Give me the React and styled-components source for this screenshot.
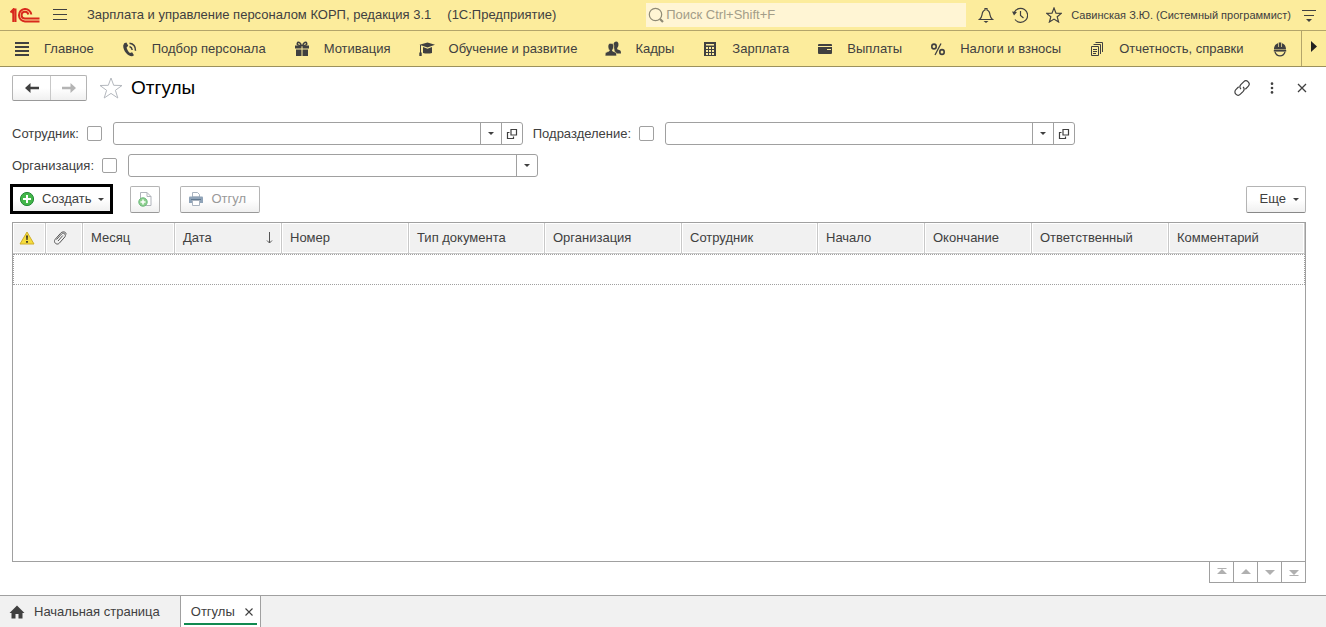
import React, { useState } from "react";
import styled, { createGlobalStyle } from "styled-components";

const sections = [
  { title: "Главное", icon: "lines" },
  { title: "Подбор персонала", icon: "phone" },
  { title: "Мотивация", icon: "gift" },
  { title: "Обучение и развитие", icon: "cap" },
  { title: "Кадры", icon: "people" },
  { title: "Зарплата", icon: "calc" },
  { title: "Выплаты", icon: "card" },
  { title: "Налоги и взносы", icon: "percent" },
  { title: "Отчетность, справки", icon: "docs" },
];

//the last column has no width, it takes the rest of the table
const columns = [
  { title: "Месяц", width: 92 },
  { title: "Дата", width: 107, sorted: true },
  { title: "Номер", width: 127 },
  { title: "Тип документа", width: 136 },
  { title: "Организация", width: 137 },
  { title: "Сотрудник", width: 136 },
  { title: "Начало", width: 107 },
  { title: "Окончание", width: 107 },
  { title: "Ответственный", width: 137 },
  { title: "Комментарий" },
];

//section and tool icons, all drawn on a 16x16 grid
const glyphs = {
  lines: <path d="M1 2h14M1 6h14M1 10h14M1 14h14" stroke="currentColor" strokeWidth="2" />,
  phone: (
    <>
      <path d="M2.2 2.2 4.4 1.4 6.2 4.8 4.6 6.4C5 8.6 6.3 10.6 8 11.9L10.1 11.2 12 14.3 10.2 15.3C6 15.6 1 9.8 1.2 4.5Z" fill="currentColor" />
      <path d="M7.500 5.500C9.200 6 10 7.200 10.200 9M7.500 2.300C11.300 2.800 13.600 5.600 13.500 9.800" fill="none" stroke="currentColor" strokeWidth="1.500" />
    </>
  ),
  gift: (
    <>
      <path d="M1 4.500h6.500v3H1zM8.500 4.500H15v3H8.500zM2 8.500h5.500V15H2zM8.500 8.500H14V15H8.500z" fill="currentColor" />
      <path d="M7.300 4.500C4 4.500 2.800 3.500 3.300 2.200S6.500 1 7.300 4.500ZM8.700 4.500C12 4.500 13.200 3.500 12.700 2.200S9.500 1 8.700 4.500Z" fill="none" stroke="currentColor" strokeWidth="1.500" />
    </>
  ),
  cap: (
    <>
      <path d="M0.500 3.700 8.500 1.500 16 3.700 8.500 6.500Z" fill="currentColor" />
      <path d="M4 6 8.500 7.700 13 6V12C10.500 12.700 6.500 12.700 4 12Z" fill="currentColor" />
      <path d="M1.500 4V12" stroke="currentColor" />
      <path d="M0.300 11.500h2.400V15H0.300z" fill="currentColor" />
    </>
  ),
  people: (
    <>
      <path d="M11 0.500C13.200 0.500 13.700 2.300 13.400 4.200 13.300 5.500 12.700 6.300 12.200 6.900V8.200L15.300 9.400Q16 9.900 16 12.500H10L8.500 3Q9 0.500 11 0.500Z" fill="currentColor" />
      <path d="M5.800 2.300C8.500 2.300 9 4.300 8.700 6 8.500 7.500 8 8.300 7.500 8.900V10L10.700 11.300Q11.700 11.900 11.700 15H0Q0 11.900 1 11.300L4.200 10V8.900C3.600 8.300 3.100 7.500 3 6 2.800 4.300 3.500 2.300 5.800 2.300Z" fill="currentColor" stroke="#fcec9c" strokeWidth="0.700" />
    </>
  ),
  calc: (
    <>
      <path d="M2 1h12v14H2z" fill="currentColor" />
      <path d="M4 3h8v1.500H4zM4 6h2v2H4zM7 6h2v2H7zM10 6h2v2h-2zM4 9h2v2H4zM7 9h2v2H7zM10 9h2v2h-2zM4 12h2v2H4zM7 12h2v2H7zM10 12h2v2h-2z" fill="#fcec9c" />
    </>
  ),
  card: (
    <>
      <path d="M2 3h12q1 0 1 1v1H1V4q0-1 1-1zM1 6h14v6q0 1-1 1H2q-1 0-1-1z" fill="currentColor" />
      <path d="M10 8.500h4" stroke="#fcec9c" />
    </>
  ),
  percent: (
    <g fill="none" stroke="currentColor">
      <ellipse cx="4" cy="5.500" rx="2.200" ry="2.400" strokeWidth="1.600" />
      <ellipse cx="12" cy="11" rx="2.200" ry="2.400" strokeWidth="1.600" />
      <path d="M11 2.500 5 14" strokeWidth="1.300" />
    </g>
  ),
  docs: (
    <g fill="none" stroke="currentColor">
      <path d="M2.500 5.500h7v9h-7zM4.500 3.500h7v9.500M6.500 1.500h7v9.500" />
      <path d="M4 8.500h4M4 10.500h4M4 12.500h3" />
    </g>
  ),
  helmet: (
    <>
      <path d="M2 8.500C2 4.500 4 3 6 2.300V6H6.700V1.600H9.300V6H10V2.300C12 3 14 4.500 14 8.500Z" fill="currentColor" />
      <path d="M1.800 9.800h12.400" stroke="currentColor" strokeWidth="1.600" />
      <path d="M3 11C4 14 6 14.800 8 14.800S12 14 13 11" fill="none" stroke="currentColor" strokeWidth="1.300" />
    </>
  ),
  burger: <path d="M1 2.500h14M1 7.500h14M1 12.500h14" stroke="currentColor" />,
  search: (
    <g fill="none" stroke="currentColor">
      <circle cx="7.500" cy="7.500" r="6.200" strokeWidth="1.200" />
      <path d="M12 12 15 15" strokeWidth="2.200" />
    </g>
  ),
  bell: (
    <>
      <path d="M1.500 12.500C4.500 10.500 3.500 7 5 4.700 5.800 3.500 7 3 7 3V1.500H9V3S10.200 3.500 11 4.700C12.500 7 11.500 10.500 14.500 12.500Z" fill="none" stroke="currentColor" strokeWidth="1.200" />
      <path d="M5.500 14h5L8 16z" fill="currentColor" />
    </>
  ),
  history: (
    <>
      <path d="M2.200 5.500A7 7 0 1 1 3 12.500M8.500 4V8.500L11.500 11" fill="none" stroke="currentColor" strokeWidth="1.200" />
      <path d="M0 4.500 5 5 2 8.500Z" fill="currentColor" />
    </>
  ),
  star: (
    <path d="M8 1 10 6.100 15.300 6.400 11.200 9.800 12.600 15 8 12.100 3.400 15 4.800 9.800 0.700 6.400 6 6.100Z" fill="none" stroke="currentColor" strokeWidth="1.200" />
  ),
  settings: (
    <>
      <path d="M1 3.500h14M3 8.500h10" stroke="currentColor" />
      <path d="M5 12h6l-3 3z" fill="currentColor" />
    </>
  ),
  link: (
    <g fill="none" stroke="currentColor" strokeWidth="1.200" transform="rotate(-45 8 8)">
      <path d="M6.500 4.800H2.500a3.200 3.200 0 0 0 0 6.400H6.500A3.200 3.200 0 0 0 9.500 8" />
      <path d="M9.500 11.200H13.500a3.200 3.200 0 0 0 0-6.400H9.500A3.200 3.200 0 0 0 6.500 8" />
    </g>
  ),
  dots: (
    <g fill="currentColor">
      <circle cx="8" cy="3" r="1.500" />
      <circle cx="8" cy="8" r="1.500" />
      <circle cx="8" cy="13" r="1.500" />
    </g>
  ),
  close: <path d="M4 4 12 12M12 4 4 12" stroke="currentColor" strokeWidth="1.300" />,
  back: <path d="M1 8 6.500 3V6.800H15V9.200H6.500V13Z" fill="currentColor" />,
  forward: <path d="M15 8 9.500 3V6.800H1V9.200H9.500V13Z" fill="currentColor" />,
  open: (
    <g fill="none" stroke="currentColor" strokeWidth="1.200">
      <path d="M7 3.500h5.500V9H7z" />
      <path d="M5.500 6.500h-2v6H9.500v-2" />
    </g>
  ),
  add: (
    <>
      <circle cx="8" cy="8" r="6.600" fill="#43b649" stroke="#258a38" />
      <path d="M8 4V12M4 8H12" stroke="#fff" strokeWidth="2" />
    </>
  ),
  copy: (
    <>
      <path d="M3.500 1.500h6.500l4 4v9H3.500z" fill="#fff" stroke="#b0b4bb" />
      <path d="M10 1.500v4h4" fill="none" stroke="#b0b4bb" />
      <circle cx="6" cy="11" r="4.200" fill="#8fd08f" stroke="#68b878" />
      <path d="M6 8.500v5M3.500 11h5" stroke="#fff" strokeWidth="1.500" />
    </>
  ),
  print: (
    <>
      <path d="M4.500 1.500h5l2 2V6h-7z" fill="#fff" stroke="#a9b3bf" />
      <path d="M2 5.500h12q1 0 1 1V12H1V6.500q0-1 1-1z" fill="#8fa3b8" />
      <path d="M3 8.500h10" stroke="#60788f" />
      <path d="M4.500 9.500h7v5h-7z" fill="#fff" stroke="#a9b3bf" />
    </>
  ),
  warning: (
    <>
      <path d="M8 2 15 14H1Z" fill="#f5dc3c" stroke="#cfae28" strokeLinejoin="round" />
      <path d="M7 5.500h2L8.600 10H7.400zM7.100 11h1.800v1.800H7.100z" fill="#3b3524" />
    </>
  ),
  clip: (
    <path d="M4.500 9.500 9.500 4C11.300 2 14.800 4.500 12.800 7L7.300 13.200C5 15.600 0.800 12.500 3.200 9.300L8.500 3.300C10 1.300 14.500 1.300 14 4.500M10.800 5.500 6 11" fill="none" stroke="#555" />
  ),
  home: <path d="M8 1.500 15.500 9H13.500V14.500H9.500V10H6.500V14.500H2.500V9H0.500Z" fill="currentColor" />,
  first: <path d="M3.500 4h9v1h-9zM8 5 13 10H3z" fill="currentColor" />,
  up: <path d="M8 5 13 10H3z" fill="currentColor" />,
  down: <path d="M3 6H13L8 11z" fill="currentColor" />,
  last: <path d="M3 6H13L8 11zM3.500 11h9v1h-9z" fill="currentColor" />,
};

function Icon({ name, size = 16 }) {
  return (
    <Svg $size={size} viewBox="0 0 16 16" aria-hidden="true">
      {glyphs[name]}
    </Svg>
  );
}

function Filter({ id, label, canOpen }) {
  const [enabled, setEnabled] = useState(false);
  const [value, setValue] = useState("");

  return (
    <FilterItem>
      <label htmlFor={`${id}-on`}>{label}</label>
      <Check
        id={`${id}-on`}
        type="checkbox"
        checked={enabled}
        onChange={(e) => setEnabled(e.target.checked)}
      />
      <Combo>
        <input
          type="text"
          aria-label={label}
          value={value}
          onChange={(e) => setValue(e.target.value)}
        />
        <button type="button" aria-label="Выбрать">
          <Caret />
        </button>
        {canOpen && (
          <button type="button" aria-label="Открыть">
            <Icon name="open" />
          </button>
        )}
      </Combo>
    </FilterItem>
  );
}

export default function App() {
  return (
    <>
      <GlobalStyle />
      <Page>
        <TitleBar>
          <Logo viewBox="0 0 30 15" role="img" aria-label="1С">
            <path d="M0.500 4.500 3.300 1.500V14M3.300 1.500H5.500V14M2 4.500H3.300" />
            <path d="M21.300 6.500A6.200 6.200 0 1 0 15 13.400H29.500" />
            <path d="M18.300 6.500A3.400 3.400 0 1 0 15 10.500H29.500" />
          </Logo>
          <IconButton type="button" aria-label="Меню">
            <Icon name="burger" />
          </IconButton>
          <AppName>
            <span>Зарплата и управление персоналом КОРП, редакция 3.1</span>
            <span>(1С:Предприятие)</span>
          </AppName>
          <Search>
            <Icon name="search" />
            <input type="search" aria-label="Поиск" placeholder="Поиск Ctrl+Shift+F" />
          </Search>
          <Tools>
            <IconButton type="button" aria-label="Уведомления">
              <Icon name="bell" />
            </IconButton>
            <IconButton type="button" aria-label="История">
              <Icon name="history" />
            </IconButton>
            <IconButton type="button" aria-label="Избранное">
              <Icon name="star" />
            </IconButton>
          </Tools>
          <User href="#user">Савинская З.Ю. (Системный программист)</User>
          <IconButton type="button" aria-label="Сервис и настройки">
            <Icon name="settings" />
          </IconButton>
        </TitleBar>

        <Sections>
          <SectionList>
            {sections.map((section) => (
              <a href="#section" key={section.title}>
                <Icon name={section.icon} />
                {section.title}
              </a>
            ))}
            <a href="#section" aria-label="Охрана труда">
              <Icon name="helmet" />
            </a>
          </SectionList>
          <ScrollButton type="button" aria-label="Далее">
            <svg width="6" height="11" viewBox="0 0 6 11">
              <path d="M0 0 6 5.500 0 11z" fill="currentColor" />
            </svg>
          </ScrollButton>
        </Sections>

        <Content>
          <Header>
            <History>
              <button type="button" aria-label="Назад">
                <Icon name="back" />
              </button>
              <button type="button" aria-label="Вперед" disabled>
                <Icon name="forward" />
              </button>
            </History>
            <Favorite type="button" aria-label="В избранное">
              <svg width="24" height="22" viewBox="0 0 24 22">
                <path
                  d="M12 1 14.700 8.300 23 8.500 16.400 13.300 18.800 21 12 16.400 5.200 21 7.600 13.300 1 8.500 9.300 8.300Z"
                  fill="none"
                  stroke="#b4b8be"
                />
              </svg>
            </Favorite>
            <h1>Отгулы</h1>
            <HeaderTools>
              <IconButton type="button" aria-label="Ссылка">
                <Icon name="link" />
              </IconButton>
              <IconButton type="button" aria-label="Еще">
                <Icon name="dots" size={14} />
              </IconButton>
              <IconButton type="button" aria-label="Закрыть">
                <Icon name="close" />
              </IconButton>
            </HeaderTools>
          </Header>

          <Filters>
            <FilterRow>
              <Filter id="employee" label="Сотрудник:" canOpen />
              <Filter id="department" label="Подразделение:" canOpen />
            </FilterRow>
            <FilterRow>
              <Filter id="company" label="Организация:" />
            </FilterRow>
          </Filters>

          <CommandBar>
            <Highlight>
              <Command type="button" $flat>
                <Icon name="add" />
                Создать
                <Caret />
              </Command>
            </Highlight>
            <Command type="button" aria-label="Скопировать" disabled $square>
              <Icon name="copy" />
            </Command>
            <Command type="button" disabled>
              <Icon name="print" />
              Отгул
            </Command>
            <More type="button">
              Еще
              <Caret />
            </More>
          </CommandBar>

          <ListFrame>
            <Table>
              <colgroup>
                <Col $width={33} />
                <Col $width={37} />
                {columns.map((column) => (
                  <Col key={column.title} $width={column.width} />
                ))}
              </colgroup>
              <thead>
                <tr>
                  <IconCell aria-label="Предупреждение">
                    <Icon name="warning" />
                  </IconCell>
                  <IconCell aria-label="Файлы">
                    <Icon name="clip" />
                  </IconCell>
                  {columns.map((column) => (
                    <th key={column.title}>
                      <HeadLabel>
                        {column.title}
                        {column.sorted && (
                          <svg width="7" height="12" viewBox="0 0 7 12">
                            <path d="M3.500 0V11M1 8.500 3.500 11 6 8.500" fill="none" stroke="#555" />
                          </svg>
                        )}
                      </HeadLabel>
                    </th>
                  ))}
                </tr>
              </thead>
              <tbody>
                <tr>
                  <td colSpan={columns.length + 2} />
                </tr>
              </tbody>
            </Table>
          </ListFrame>
          <Pager>
            <button type="button" aria-label="В начало"><Icon name="first" /></button>
            <button type="button" aria-label="Вверх"><Icon name="up" /></button>
            <button type="button" aria-label="Вниз"><Icon name="down" /></button>
            <button type="button" aria-label="В конец"><Icon name="last" /></button>
          </Pager>
        </Content>

        <Tabs>
          <HomeTab href="#home">
            <Icon name="home" />
            Начальная страница
          </HomeTab>
          <Tab>
            <a href="#list">Отгулы</a>
            <IconButton type="button" aria-label="Закрыть вкладку">
              <Icon name="close" size={14} />
            </IconButton>
          </Tab>
        </Tabs>
      </Page>
    </>
  );
}


//adding css properties

const GlobalStyle = createGlobalStyle`
  * {
    box-sizing: border-box;
  }
  body {
    margin: 0;
    background-color: #fff;
    color: #404040;
    font: 13px/16px "Liberation Sans", Arial, sans-serif;
  }
  button, input {
    margin: 0;
    padding: 0;
    border: none;
    background: none;
    color: inherit;
    font: inherit;
  }
  a {
    color: inherit;
    text-decoration: none;
  }
`;

const Svg = styled.svg`
  display: block;
  flex: none;
  width: ${(props) => props.$size}px;
  height: ${(props) => props.$size}px;
`;

const Caret = styled.span`
  flex: none;
  border: 3px solid transparent;
  border-top-color: #404040;
  border-bottom: none;
`;

const Page = styled.div`
  display: flex;
  flex-direction: column;
  min-height: 100vh;
`;

const TitleBar = styled.header`
  display: flex;
  align-items: center;
  height: 31px;
  padding: 0 9px 0 10px;
  background-color: #fcec9c;
  border-bottom: 1px solid #b3a56a;
`;

const Logo = styled.svg`
  flex: none;
  width: 30px;
  height: 15px;
  margin-right: 12px;
  path {
    fill: none;
    stroke: #d8291c;
    stroke-width: 2;
  }
`;

const IconButton = styled.button`
  display: flex;
  flex: none;
  align-items: center;
`;

const AppName = styled.div`
  display: flex;
  gap: 16px;
  margin-left: 19px;
  white-space: nowrap;
`;

const Search = styled.div`
  display: flex;
  align-items: center;
  flex: 0 1 320px;
  height: 24px;
  margin-left: auto;
  padding: 0 2px;
  background-color: #fff5d4;
  color: #8f8a75;
  input {
    flex: 1;
    min-width: 0;
    margin-left: 2px;
    outline: none;
  }
  input::placeholder {
    color: #a39d88;
    opacity: 1;
  }
`;

const Tools = styled.div`
  display: flex;
  gap: 18px;
  margin: 0 9px 0 12px;
`;

const User = styled.a`
  margin-right: 10px;
  font-size: 11px;
  white-space: nowrap;
`;

const Sections = styled.nav`
  display: flex;
  height: 36px;
  background-color: #fcec9c;
  border-bottom: 1px solid #9c915c;
`;

const SectionList = styled.div`
  display: flex;
  align-items: center;
  flex: 1;
  gap: 28px;
  min-width: 0;
  padding-left: 14px;
  overflow: hidden;
  a {
    display: flex;
    align-items: center;
    gap: 14px;
    white-space: nowrap;
  }
`;

const ScrollButton = styled.button`
  display: flex;
  justify-content: center;
  width: 25px;
  padding-top: 10px;
  border-left: 1px solid #b3a56a;
  color: #222;
`;

const Content = styled.main`
  display: flex;
  flex-direction: column;
  flex: 1;
  padding: 8px 20px 12px 12px;
`;

const Header = styled.div`
  display: flex;
  align-items: center;
  height: 26px;
  h1 {
    margin: 0 0 0 8px;
    color: #000;
    font-size: 19px;
    font-weight: normal;
    line-height: 24px;
  }
`;

const History = styled.div`
  display: flex;
  height: 26px;
  border: 1px solid #b4b4b4;
  border-bottom-color: #999;
  border-radius: 2px;
  background: linear-gradient(#fff 50%, #f0f0f0);
  button {
    display: flex;
    align-items: center;
    justify-content: center;
    width: 37px;
  }
  button + button {
    width: 36px;
    border-left: 1px solid #c8c8c8;
    color: #b4b4b4;
  }
`;

const Favorite = styled.button`
  display: flex;
  margin-left: 12px;
`;

const HeaderTools = styled.div`
  display: flex;
  align-items: center;
  gap: 15px;
  margin: 0 -4px 0 auto;
`;

const Filters = styled.div`
  display: flex;
  flex-direction: column;
  gap: 9px;
  margin-top: 21px;
`;

const FilterRow = styled.div`
  display: flex;
  gap: 10px;
`;

const FilterItem = styled.div`
  display: flex;
  align-items: center;
  flex: 0 1 auto;
  min-width: 0;
  white-space: nowrap;
`;

const Check = styled.input`
  appearance: none;
  flex: none;
  width: 15px;
  height: 15px;
  margin: 0 11px 0 8px;
  border: 1px solid #a0a0a0;
  border-radius: 2px;
  &:checked {
    background-color: #404040;
    box-shadow: inset 0 0 0 3px #fff;
  }
`;

const Combo = styled.div`
  display: flex;
  flex: 0 1 410px;
  width: 410px;
  height: 23px;
  border: 1px solid #a0a0a0;
  border-radius: 3px;
  input {
    flex: 1;
    min-width: 0;
    padding: 0 5px;
    outline: none;
  }
  button {
    display: flex;
    align-items: center;
    justify-content: center;
    flex: none;
    width: 21px;
    border-left: 1px solid #a0a0a0;
  }
`;

const CommandBar = styled.div`
  display: flex;
  align-items: center;
  gap: 20px;
  height: 30px;
  margin-top: 7px;
`;

//frame around the main command
const Highlight = styled.div`
  display: flex;
  margin: 0 -3px 0 -2px;
  border: 3px solid #000;
`;

const Command = styled.button`
  display: flex;
  align-items: center;
  justify-content: center;
  gap: 7px;
  height: ${(props) => (props.$flat ? 24 : 27)}px;
  width: ${(props) => (props.$square ? "30px" : "auto")};
  padding: ${(props) => (props.$square ? "0" : props.$flat ? "0 6px" : "0 13px 0 7px")};
  border: ${(props) => (props.$flat ? "none" : "1px solid #b4b4b4")};
  border-radius: ${(props) => (props.$flat ? 0 : 2)}px;
  background: linear-gradient(#fff 50%, #f0f0f0);
  &:disabled {
    border-bottom-color: #999;
    color: #999;
  }
`;

const More = styled(Command)`
  margin-left: auto;
  padding: 0 6px 0 13px;
  border-bottom-color: #888;
`;

const ListFrame = styled.div`
  flex: 1;
  margin-top: 8px;
  border: 1px solid #a0a0a0;
`;

const Table = styled.table`
  width: 100%;
  table-layout: fixed;
  border-collapse: separate;
  border-spacing: 0;
  th {
    height: 31px;
    padding: 0 8px;
    border-right: 1px solid #c8c8c8;
    border-bottom: 1px solid #c8c8c8;
    background-color: #f1f1f1;
    box-shadow: inset 0 0 0 1px #fff;
    font-weight: normal;
    text-align: left;
    white-space: nowrap;
  }
  td {
    height: 31px;
    padding: 0;
    border: 1px dotted #a0a0a0;
  }
`;

const Col = styled.col`
  width: ${(props) => (props.$width ? `${props.$width}px` : "auto")};
`;

const IconCell = styled.th`
  && {
    padding-left: 6px;
  }
`;

const HeadLabel = styled.div`
  display: flex;
  align-items: center;
  justify-content: space-between;
`;

const Pager = styled.div`
  display: flex;
  align-self: flex-end;
  margin-top: -1px;
  border: 1px solid #a0a0a0;
  color: #b0b0b0;
  button {
    display: flex;
    align-items: center;
    justify-content: center;
    width: 24px;
    height: 20px;
  }
  button:first-child {
    width: 23px;
  }
  button + button {
    border-left: 1px solid #a0a0a0;
  }
`;

const Tabs = styled.footer`
  display: flex;
  height: 32px;
  border-top: 1px solid #a0a0a0;
  background-color: #f1f1f1;
`;

const HomeTab = styled.a`
  display: flex;
  align-items: center;
  gap: 9px;
  padding: 0 20px 0 9px;
`;

const Tab = styled.div`
  display: flex;
  align-items: center;
  gap: 7px;
  padding: 0 4px 0 10px;
  border: solid #a0a0a0;
  border-width: 0 1px;
  background: linear-gradient(#118a50, #118a50) center bottom 2px / calc(100% - 6px) 2px no-repeat #fff;
`;
